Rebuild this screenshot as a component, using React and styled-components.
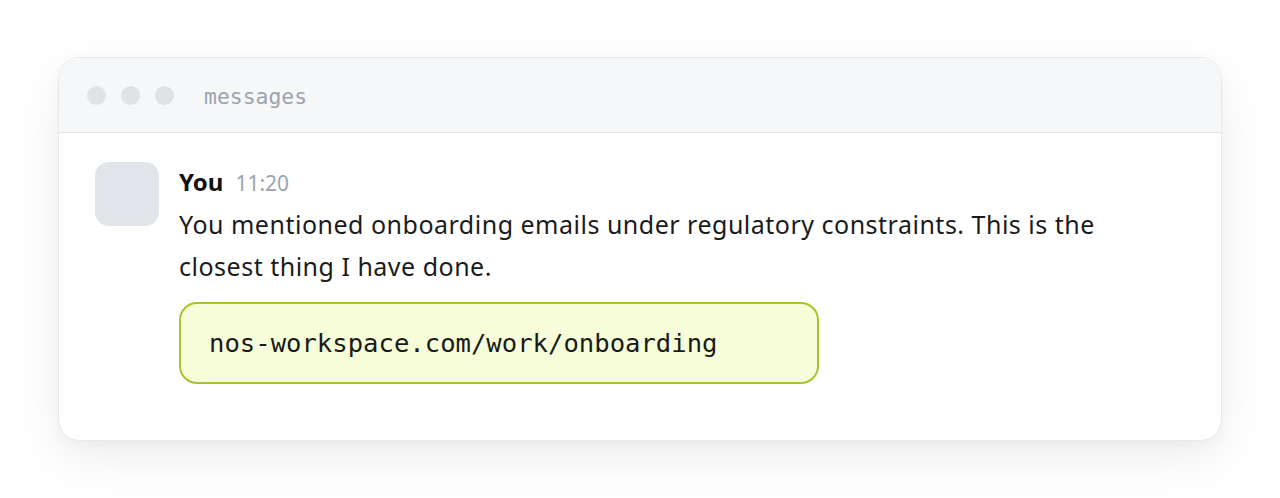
import React from 'react';
import styled, { createGlobalStyle } from 'styled-components';

const GlobalStyle = createGlobalStyle`
    body {
        margin: 0;
        background: #ffffff;
        font-family: "Noto Sans", "Open Sans", sans-serif;
    }
`

const Page = styled.div`
    padding: 57px 58px 58px 58px;
`

const Window = styled.div`
    background: #ffffff;
    border: 1px solid #e6e8eb;
    border-radius: 22px;
    overflow: hidden;
    box-shadow: 0 18px 50px rgba(0, 0, 0, 0.07), 0 4px 14px rgba(0, 0, 0, 0.03);
`

const TitleBar = styled.div`
    display: flex;
    align-items: center;
    height: 74px;
    padding: 0 28px;
    background: #f6f7f9;
    border-bottom: 1px solid #e3e5e8;
`

const Dots = styled.div`
    display: flex;
    gap: 15px;
    margin-right: 30px;
`

const Dot = styled.span`
    width: 19px;
    height: 19px;
    border-radius: 50%;
    background: #e0e2e6;
`

const Title = styled.span`
    font-family: "DejaVu Sans Mono", monospace;
    font-size: 21.4px;
    color: #9ca3af;
    padding-top: 2px;
`

const Body = styled.div`
    display: flex;
    gap: 20px;
    padding: 29px 36px 56px 36px;
`

const Avatar = styled.div`
    flex: none;
    width: 64px;
    height: 64px;
    border-radius: 14px;
    background: #e1e4e9;
`

const Content = styled.div`
    display: flex;
    flex-direction: column;
`

const Meta = styled.div`
    display: flex;
    align-items: baseline;
    gap: 12px;
    line-height: 40px;
`

const Name = styled.span`
    font-size: 24px;
    font-weight: 700;
    color: #111111;
`

const Time = styled.span`
    font-size: 21px;
    color: #9ca3af;
`

const Text = styled.p`
    margin: 0;
    max-width: 945px;
    font-size: 25px;
    letter-spacing: 0.5px;
    line-height: 42px;
    color: #1b1b1b;
`

const LinkCard = styled.div`
    margin-top: 15px;
    width: 640px;
    height: 82px;
    box-sizing: border-box;
    display: flex;
    align-items: center;
    padding: 0 28px;
    border: 2px solid #a9c42a;
    border-radius: 18px;
    background: #f6fdd8;
    font-family: "DejaVu Sans Mono", monospace;
    font-size: 25.6px;
    color: #1a1a1a;
`

function App() {
    return (
        <Page>
            <GlobalStyle />
            <Window>
                <TitleBar>
                    <Dots>
                        <Dot />
                        <Dot />
                        <Dot />
                    </Dots>
                    <Title>messages</Title>
                </TitleBar>
                <Body>
                    <Avatar />
                    <Content>
                        <Meta>
                            <Name>You</Name>
                            <Time>11:20</Time>
                        </Meta>
                        <Text>
                            You mentioned onboarding emails under regulatory constraints. This is the closest thing I have done.
                        </Text>
                        <LinkCard>nos-workspace.com/work/onboarding</LinkCard>
                    </Content>
                </Body>
            </Window>
        </Page>
    );
}

export default App;
